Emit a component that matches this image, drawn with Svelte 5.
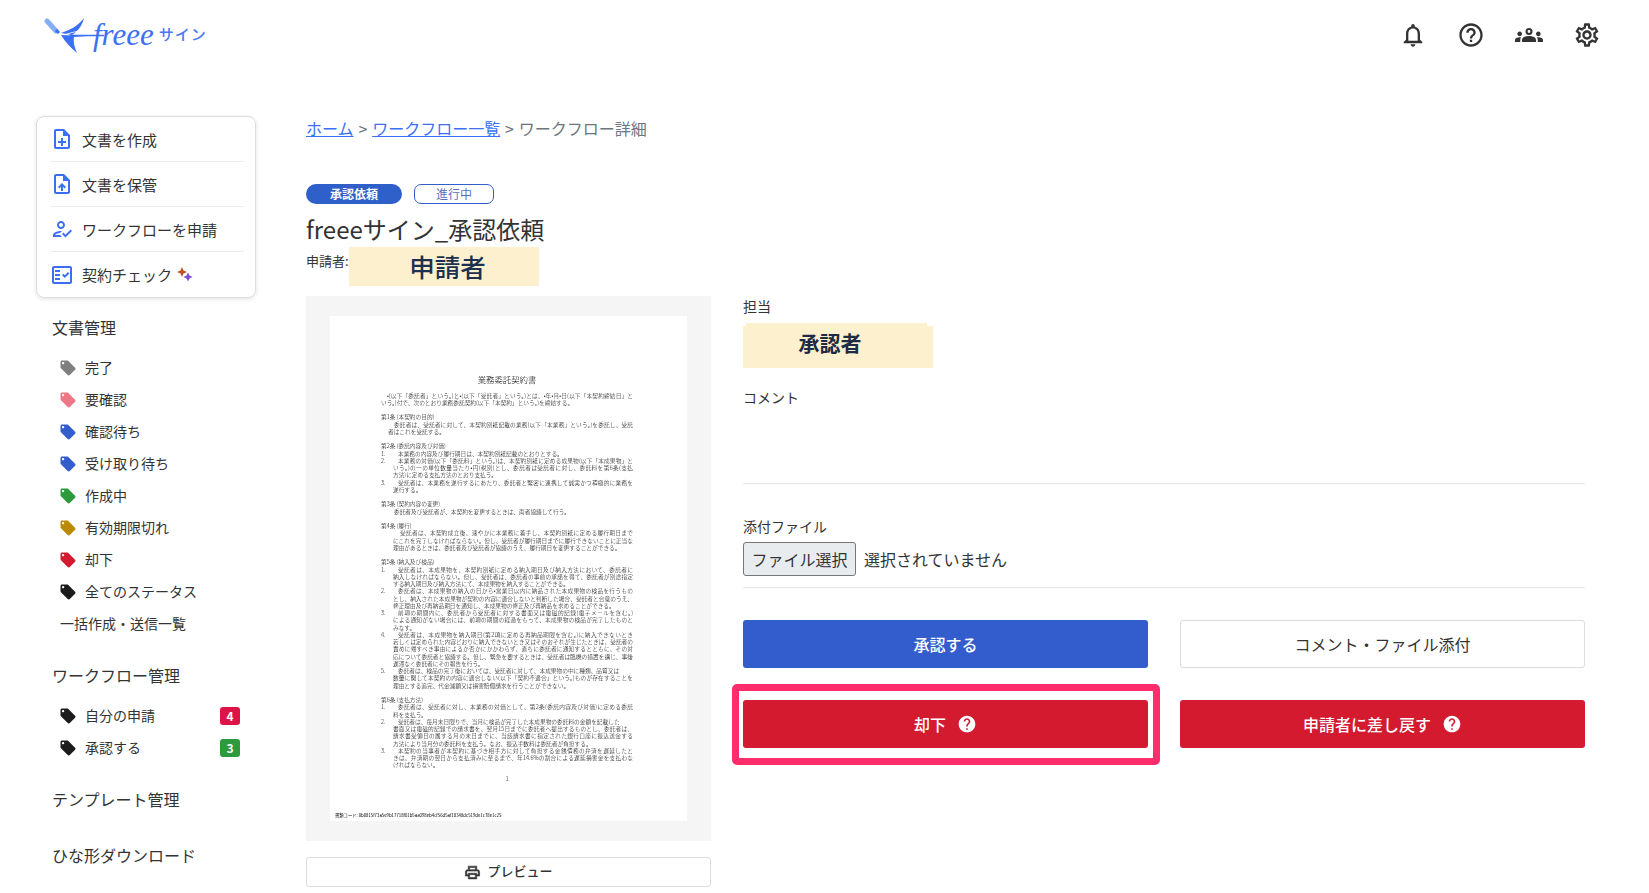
<script>
  const tagPath = "M21.41 11.58l-9-9C12.05 2.22 11.55 2 11 2H4c-1.1 0-2 .9-2 2v7c0 .55.22 1.05.59 1.42l9 9c.36.36.86.58 1.41.58.55 0 1.05-.22 1.41-.59l7-7c.37-.36.59-.86.59-1.41 0-.55-.23-1.06-.59-1.42zM5.5 7C4.67 7 4 6.33 4 5.5S4.67 4 5.5 4 7 4.67 7 5.5 6.33 7 5.5 7z";
  const helpPath = "M12 2C6.48 2 2 6.48 2 12s4.48 10 10 10 10-4.48 10-10S17.52 2 12 2zm1 17h-2v-2h2v2zm2.07-7.75l-.9.92C13.45 12.9 13 13.5 13 15h-2v-.5c0-1.1.45-2.1 1.17-2.83l1.24-1.26c.37-.36.59-.86.59-1.41 0-1.1-.9-2-2-2s-2 .9-2 2H8c0-2.21 1.79-4 4-4s4 1.79 4 4c0 .88-.36 1.68-.93 2.25z";

  const actions = [
    { label: "文書を作成", d: "M13 11h-2v3H8v2h3v3h2v-3h3v-2h-3zm1-9H6c-1.1 0-2 .9-2 2v16c0 1.1.89 2 1.99 2H18c1.1 0 2-.9 2-2V8l-6-6zm4 18H6V4h7v5h5v11z" },
    { label: "文書を保管", d: "M14 2H6c-1.1 0-2 .9-2 2v16c0 1.1.89 2 1.99 2H18c1.1 0 2-.9 2-2V8l-6-6zm4 18H6V4h7v5h5v11zM8 15.01l1.41 1.41L11 14.84V19h2v-4.16l1.59 1.59L16 15.01 12.01 11 8 15.01z" },
    { label: "ワークフローを申請", d: "M11 12c2.21 0 4-1.79 4-4s-1.79-4-4-4-4 1.79-4 4 1.79 4 4 4zm0-6c1.1 0 2 .9 2 2s-.9 2-2 2-2-.9-2-2 .9-2 2-2zM5 18c.2-.63 2.57-1.68 4.96-1.94l2.04-2c-.39-.04-.68-.06-1-.06-2.67 0-8 1.34-8 4v2h9l-2-2H5zm15.6-5.5l-5.13 5.17-2.07-2.08L12 17l3.47 3.5L22 13.91z" },
    { label: "契約チェック", sparkle: true, d: "M20 3H4c-1.1 0-2 .9-2 2v14c0 1.1.9 2 2 2h16c1.1 0 2-.9 2-2V5c0-1.1-.9-2-2-2zm0 16H4V5h16v14zM19.41 10.42L17.99 9l-3.17 3.17-1.41-1.42L12 12.16 14.82 15zM5 7h5v2H5zM5 11h5v2H5zM5 15h5v2H5z" }
  ];

  const statuses = [
    { label: "完了", color: "#7f7f7f" },
    { label: "要確認", color: "#ee7785" },
    { label: "確認待ち", color: "#335dcc" },
    { label: "受け取り待ち", color: "#335dcc" },
    { label: "作成中", color: "#2c9a3d" },
    { label: "有効期限切れ", color: "#bb8a00" },
    { label: "却下", color: "#d31a2f" },
    { label: "全てのステータス", color: "#1c1c1c" }
  ];

  const workflows = [
    { label: "自分の申請", count: 4, badge: "#dc1446" },
    { label: "承認する", count: 3, badge: "#2c9a3d" }
  ];

  // x: indent, n: clause number, j: stretch to the full measure
  const lines = [
    { x: 6, t: "•(以下「委託者」という。)と•(以下「受託者」という。)とは、•年•月•日(以下「本契約締結日」と", j: 1 },
    { t: "いう。)付で、次のとおり業務委託契約(以下「本契約」という。)を締結する。" },
    {},
    { t: "第1条 (本契約の目的)" },
    { x: 13, t: "委託者は、受託者に対して、本契約別紙記載の業務(以下「本業務」という。)を委託し、受託", j: 1 },
    { x: 7, t: "者はこれを受託する。" },
    {},
    { t: "第2条 (委託内容及び対価)" },
    { n: "1.", t: "本業務の内容及び履行期日は、本契約別紙記載のとおりとする。" },
    { n: "2.", t: "本業務の対価(以下「委託料」という。)は、本契約別紙に定める成果物(以下「本成果物」と", j: 1 },
    { x: 12, t: "いう。)の一の単位数量当たり•円(税別)とし、委託者は受託者に対し、委託料を第6条(支払", j: 1 },
    { x: 12, t: "方法)に定める支払方法のとおり支払う。" },
    { n: "3.", t: "受託者は、本業務を遂行するにあたり、委託者と緊密に連携して誠実かつ積極的に業務を", j: 1 },
    { x: 12, t: "遂行する。" },
    {},
    { t: "第3条 (契約内容の変更)" },
    { x: 13, t: "委託者及び受託者が、本契約を変更するときは、両者協議して行う。" },
    {},
    { t: "第4条 (履行)" },
    { x: 19, t: "受託者は、本契約成立後、速やかに本業務に着手し、本契約別紙に定める履行期日まで", j: 1 },
    { x: 12, t: "にこれを完了しなければならない。但し、受託者が履行期日までに履行できないことに正当な", j: 1 },
    { x: 12, t: "理由があるときは、委託者及び受託者が協議のうえ、履行期日を変更することができる。" },
    {},
    { t: "第5条 (納入及び検品)" },
    { n: "1.", t: "受託者は、本成果物を、本契約別紙に定める納入期日及び納入方法において、委託者に", j: 1 },
    { x: 12, t: "納入しなければならない。但し、受託者は、委託者の事前の承諾を得て、委託者が別途指定", j: 1 },
    { x: 12, t: "する納入期日及び納入方法にて、本成果物を納入することができる。" },
    { n: "2.", t: "委託者は、本成果物の納入の日から•営業日以内に納品された本成果物の検品を行うもの", j: 1 },
    { x: 12, t: "とし、納入された本成果物が契約の内容に適合しないと判断した場合、受託者と合意のうえ、", j: 1 },
    { x: 12, t: "修正理由及び再納品期日を通知し、本成果物の修正及び再納品を求めることができる。" },
    { n: "3.", t: "前項の期間内に、委託者から受託者に対する書面又は電磁的記録(電子メールを含む。)", j: 1 },
    { x: 12, t: "による通知がない場合には、前項の期間の経過をもって、本成果物の検品が完了したものと", j: 1 },
    { x: 12, t: "みなす。" },
    { n: "4.", t: "受託者は、本成果物を納入期日(第2項に定める再納品期限を含む。)に納入できないとき", j: 1 },
    { x: 12, t: "若しくは定められた内容どおりに納入できないとき又はそのおそれが生じたときは、受託者の", j: 1 },
    { x: 12, t: "責めに帰すべき事由によるか否かにかかわらず、直ちに委託者に通知するとともに、その対", j: 1 },
    { x: 12, t: "応について委託者と協議する。但し、緊急を要するときは、受託者は臨機の措置を講じ、事後", j: 1 },
    { x: 12, t: "遅滞なく委託者にその報告を行う。" },
    { n: "5.", t: "委託者は、検品の完了後においては、受託者に対して、本成果物の中に種類、品質又は" },
    { x: 12, t: "数量に関して本契約の内容に適合しない(以下「契約不適合」という。)ものが存在することを", j: 1 },
    { x: 12, t: "理由とする追完、代金減額又は損害賠償請求を行うことができない。" },
    {},
    { t: "第6条 (支払方法)" },
    { n: "1.", t: "委託者は、受託者に対し、本業務の対価として、第2条(委託内容及び対価)に定める委託", j: 1 },
    { x: 12, t: "料を支払う。" },
    { n: "2.", t: "受託者は、毎月末日限りで、当月に検品が完了した本成果物の委託料の金額を記載した" },
    { x: 12, t: "書面又は電磁的記録での請求書を、翌月15日までに委託者へ提出するものとし、委託者は、", j: 1 },
    { x: 12, t: "請求書受領日の属する月の末日までに、当該請求書に指定された銀行口座に振込送金する", j: 1 },
    { x: 12, t: "方法により当月分の委託料を支払う。なお、振込手数料は委託者が負担する。" },
    { n: "3.", t: "本契約の当事者が本契約に基づき相手方に対して負担する金銭債務の弁済を遅延したと", j: 1 },
    { x: 12, t: "きは、弁済期の翌日から支払済みに至るまで、年14.6%の割合による遅延損害金を支払わな", j: 1 },
    { x: 12, t: "ければならない。" }
  ];
</script>

<header class="top">
  <div class="logo">
    <svg class="bird" viewBox="0 0 60 40" width="60" height="40" aria-hidden="true">
      <path d="M3 4l9 10" stroke="#86aef8" stroke-width="5" stroke-linecap="round" fill="none" />
      <path d="M12 13l3 3" stroke="#3b6ff5" stroke-width="3" fill="none" />
      <path d="M17 16C26 13 34 9 40 1C38 9 34 14 28 18Z" fill="#3b6ff5" />
      <path d="M17 18L43 19L30 20C29 26 31 31 33 36C27 31 21 25 17 18Z" fill="#3b6ff5" />
      <path d="M22 17.200L36 13.500" stroke="#fff" stroke-width="0.8" fill="none" />
      <path d="M26 18.500H60" stroke="#3b6ff5" stroke-width="1.400" fill="none" />
    </svg>
    <span class="script">freee</span>
    <span class="sign">サイン</span>
  </div>
  <nav class="tools">
    <svg viewBox="0 0 24 24"><path d="M12 22c1.1 0 2-.9 2-2h-4c0 1.1.9 2 2 2zm6-6v-5c0-3.07-1.63-5.64-4.5-6.32V4c0-.83-.67-1.5-1.5-1.5s-1.5.67-1.5 1.5v.68C7.64 5.36 6 7.92 6 11v5l-2 2v1h16v-1l-2-2zm-2 1H8v-6c0-2.48 1.51-4.5 4-4.5s4 2.02 4 4.5v6z" /></svg>
    <svg viewBox="0 0 24 24"><path d="M11 18h2v-2h-2v2zm1-16C6.48 2 2 6.48 2 12s4.48 10 10 10 10-4.48 10-10S17.52 2 12 2zm0 18c-4.41 0-8-3.59-8-8s3.59-8 8-8 8 3.59 8 8-3.59 8-8 8zm0-14c-2.21 0-4 1.79-4 4h2c0-1.1.9-2 2-2s2 .9 2 2c0 2-3 1.75-3 5h2c0-2.25 3-2.5 3-5 0-2.21-1.79-4-4-4z" /></svg>
    <svg viewBox="0 0 24 24"><path fill-rule="evenodd" d="M12 6a3 3 0 1 1 0 6 3 3 0 0 1 0-6zm0 1.800a1.200 1.200 0 1 0 0 2.400 1.200 1.200 0 0 0 0-2.400zM12 12.750c1.630 0 3.070.390 4.240.900 1.080.480 1.760 1.560 1.760 2.730V18H6v-1.610c0-1.180.680-2.260 1.760-2.730 1.170-.520 2.610-.910 4.240-.910zM4 13c1.100 0 2-.900 2-2s-.900-2-2-2-2 .900-2 2 .900 2 2 2zm1.130 1.100c-.370-.060-.740-.100-1.130-.100-.990 0-1.930.210-2.780.580C.480 14.900 0 15.620 0 16.430V18h4.500v-1.610c0-.830.230-1.610.630-2.290zM20 13c1.100 0 2-.900 2-2s-.900-2-2-2-2 .900-2 2 .900 2 2 2zm4 3.430c0-.810-.480-1.530-1.220-1.850-.850-.370-1.790-.580-2.780-.580-.390 0-.760.040-1.130.100.400.680.630 1.460.630 2.290V18H24v-1.570z" /></svg>
    <svg viewBox="0 0 24 24"><path d="M19.43 12.98c.04-.32.07-.64.07-.98 0-.34-.03-.66-.07-.98l2.11-1.65c.19-.15.24-.42.12-.64l-2-3.46c-.09-.16-.26-.25-.44-.25-.06 0-.12.01-.17.03l-2.49 1c-.52-.4-1.08-.73-1.69-.98l-.38-2.65C14.46 2.18 14.25 2 14 2h-4c-.25 0-.46.18-.49.42l-.38 2.65c-.61.25-1.17.59-1.69.98l-2.49-1c-.06-.02-.12-.03-.18-.03-.17 0-.34.09-.43.25l-2 3.46c-.13.22-.07.49.12.64l2.11 1.65c-.04.32-.07.65-.07.98 0 .33.03.66.07.98l-2.11 1.65c-.19.15-.24.42-.12.64l2 3.46c.09.16.26.25.44.25.06 0 .12-.01.17-.03l2.49-1c.52.4 1.08.73 1.69.98l.38 2.65c.03.24.24.42.49.42h4c.25 0 .46-.18.49-.42l.38-2.65c.61-.25 1.17-.59 1.69-.98l2.49 1c.06.02.12.03.18.03.17 0 .34-.09.43-.25l2-3.46c.12-.22.07-.49-.12-.64l-2.11-1.65zm-1.98-1.71c.04.31.05.52.05.73 0 .21-.02.43-.05.73l-.14 1.13.89.7 1.08.84-.7 1.21-1.27-.51-1.04-.42-.9.68c-.43.32-.84.56-1.25.73l-1.06.43-.16 1.13-.2 1.35h-1.4l-.19-1.35-.16-1.13-1.06-.43c-.43-.18-.83-.41-1.23-.71l-.91-.7-1.06.43-1.27.51-.7-1.21 1.08-.84.89-.7-.14-1.13c-.03-.31-.05-.54-.05-.74s.02-.43.05-.73l.14-1.13-.89-.7-1.08-.84.7-1.21 1.27.51 1.04.42.9-.68c.43-.32.84-.56 1.25-.73l1.06-.43.16-1.13.2-1.35h1.39l.19 1.35.16 1.13 1.06.43c.43.18.83.41 1.23.71l.91.7 1.06-.43 1.27-.51.7 1.21-1.07.85-.89.7.14 1.13zM12 8c-2.21 0-4 1.79-4 4s1.79 4 4 4 4-1.79 4-4-1.79-4-4-4zm0 6c-1.1 0-2-.9-2-2s.9-2 2-2 2 .9 2 2-.9 2-2 2z" /></svg>
  </nav>
</header>

<div class="layout">
  <aside class="side">
    <div class="card">
      {#each actions as a}
        <div class="action">
          <svg viewBox="0 0 24 24"><path d={a.d} /></svg>
          <span>{a.label}</span>
          {#if a.sparkle}
            <svg class="sparkle" viewBox="0 0 16 16">
              <path d="M5 0L6.500 3.500 10 5 6.500 6.500 5 10 3.500 6.500 0 5 3.500 3.500Z" fill="#c2501c" />
              <path d="M11 5.500L12.500 8.500 15.500 10 12.500 11.500 11 14.500 9.500 11.500 6.500 10 9.500 8.500Z" fill="#7a4fdc" />
            </svg>
          {/if}
        </div>
      {/each}
    </div>

    <h3 class="group first">文書管理</h3>
    <ul class="list">
      {#each statuses as s}
        <li>
          <svg class="tag" viewBox="0 0 24 24"><path d={tagPath} fill={s.color} /></svg>
          {s.label}
        </li>
      {/each}
      <li class="plain">一括作成・送信一覧</li>
    </ul>

    <h3 class="group">ワークフロー管理</h3>
    <ul class="list">
      {#each workflows as w}
        <li>
          <svg class="tag" viewBox="0 0 24 24"><path d={tagPath} fill="#1c1c1c" /></svg>
          {w.label}
          <b class="count" style="background:{w.badge}">{w.count}</b>
        </li>
      {/each}
    </ul>

    <h3 class="group">テンプレート管理</h3>
    <h3 class="group far">ひな形ダウンロード</h3>
  </aside>

  <main class="main">
    <div class="crumbs">
      <a href="#home">ホーム</a> &gt; <a href="#list">ワークフロー一覧</a> &gt; ワークフロー詳細
    </div>

    <div class="pills">
      <span class="pill solid">承認依頼</span>
      <span class="pill outline">進行中</span>
    </div>

    <h1 class="title">freeeサイン_承認依頼</h1>

    <div class="applicant">
      <span class="applicant-label">申請者:</span>
      <span class="applicant-name">申請者</span>
    </div>

    <div class="content">
      <section class="left">
        <div class="viewer">
          <div class="page">
            <div class="doc-title">業務委託契約書</div>
            <div class="doc-body">
              {#each lines as l}
                <div class="line" style="margin-left:{l.x || 0}px">
                  {#if l.n}<span class="num">{l.n}</span>{/if}
                  <span class="txt" class:just={l.j}>{l.t || ""}</span>
                </div>
              {/each}
            </div>
            <div class="page-no">1</div>
            <div class="code">書類コード: 0b0815f73a5e9b17718f01b5aa098eb4cf56d5af18348dc519de1c78e1c25</div>
          </div>
        </div>
        <button class="preview" type="button">
          <svg viewBox="0 0 24 24"><path d="M19 8h-1V3H6v5H5c-1.660 0-3 1.340-3 3v6h4v4h12v-4h4v-6c0-1.660-1.340-3-3-3zM8 5h8v3H8V5zm8 14H8v-4h8v4zm4-4h-2v-2H6v2H4v-4c0-.550.450-1 1-1h14c.550 0 1 .450 1 1v4z" /></svg>
          <span>プレビュー</span>
        </button>
      </section>

      <section class="right">
        <div class="label">担当</div>
        <div class="assignee">承認者</div>

        <div class="label comment">コメント</div>
        <hr class="rule comment-rule" />

        <div class="label attach">添付ファイル</div>
        <div class="file">
          <button class="file-btn" type="button">ファイル選択</button>
          <span>選択されていません</span>
        </div>
        <hr class="rule file-rule" />

        <div class="buttons">
          <button class="btn blue" type="button">承認する</button>
          <button class="btn ghost" type="button">コメント・ファイル添付</button>
          <div class="marked">
            <button class="btn red" type="button">
              却下
              <svg viewBox="0 0 24 24"><path d={helpPath} /></svg>
            </button>
          </div>
          <button class="btn red" type="button">
            申請者に差し戻す
            <svg viewBox="0 0 24 24"><path d={helpPath} /></svg>
          </button>
        </div>
      </section>
    </div>
  </main>
</div>

<style>
  :global(body) {
    font-family: "Noto Sans CJK JP", "Noto Sans", sans-serif;
    color: #333;
    background: #fff;
  }

  .top {
    height: 116px;
    display: flex;
    align-items: flex-start;
    justify-content: space-between;
    padding: 0 48px 0 44px;
    box-sizing: border-box;
  }

  .logo {
    display: flex;
    align-items: center;
    height: 40px;
    margin-top: 15px;
    color: #3b6ff5;
  }
  .bird {
    flex: none;
    margin-top: 4px;
  }
  .script {
    font-family: "Liberation Serif", serif;
    font-style: italic;
    font-size: 31px;
    margin-left: -11px;
    line-height: 40px;
  }
  .sign {
    font-size: 15px;
    font-weight: 500;
    letter-spacing: 1px;
    margin: -3px 0 0 5px;
    color: #4a78f3;
  }

  .tools {
    display: flex;
    gap: 30px;
    margin-top: 21px;
  }
  .tools svg {
    width: 28px;
    height: 28px;
    fill: #333;
  }

  .layout {
    display: flex;
    padding-left: 36px;
  }

  .side {
    width: 220px;
    flex: none;
  }

  .card {
    height: 182px;
    box-sizing: border-box;
    border: 1px solid #ddd;
    border-radius: 8px;
    box-shadow: 0 1px 4px rgba(0, 0, 0, 0.12);
    padding: 0 11px 0 13px;
  }
  .action {
    height: 45px;
    box-sizing: border-box;
    display: flex;
    align-items: center;
    gap: 8px;
    font-size: 15px;
    border-bottom: 1px solid #ececec;
  }
  .action:last-child {
    border-bottom: 0;
  }
  .action svg {
    width: 24px;
    height: 24px;
    fill: #3b6ff5;
    flex: none;
  }
  .action .sparkle {
    width: 16px;
    height: 16px;
    margin-left: -3px;
  }

  .group {
    margin: 24px 0 0 16px;
    font-size: 16px;
    font-weight: 400;
    line-height: 24px;
  }
  .group.first {
    margin-top: 17px;
  }
  .group.far {
    margin-top: 32px;
  }

  .list {
    list-style: none;
    margin: 12px 0 0;
    padding: 0 16px 0 23px;
  }
  .list li {
    height: 32px;
    display: flex;
    align-items: center;
    gap: 8px;
    font-size: 14px;
  }
  .list li.plain {
    padding-left: 1px;
  }
  .tag {
    width: 18px;
    height: 18px;
    flex: none;
    margin-top: 2px;
  }
  .count {
    margin-left: auto;
    margin-top: 2px;
    width: 20px;
    height: 18px;
    border-radius: 3px;
    color: #fff;
    font-size: 12px;
    font-weight: 700;
    text-align: center;
    line-height: 18px;
  }

  .main {
    width: 1279px;
    margin-left: 50px;
  }

  .crumbs {
    height: 24px;
    line-height: 24px;
    font-size: 16px;
    color: #6c757d;
    word-spacing: 1.300px;
  }
  .crumbs a {
    color: #3b6ff5;
    text-decoration: underline;
  }

  .pills {
    display: flex;
    gap: 12px;
    margin-top: 44px;
  }
  .pill {
    height: 20px;
    box-sizing: border-box;
    font-size: 12px;
    line-height: 18px;
    text-align: center;
  }
  .solid {
    width: 96px;
    background: #2f5fc8;
    color: #fff;
    font-weight: 700;
    border-radius: 10px;
    line-height: 20px;
  }
  .outline {
    width: 80px;
    border: 1px solid #335dcc;
    border-radius: 7px;
    color: #5a6fc0;
  }

  .title {
    margin: 8px 0 0;
    font-size: 24px;
    font-weight: 400;
    line-height: 34px;
  }

  .applicant {
    display: flex;
    height: 39px;
    margin-top: 1px;
  }
  .applicant-label {
    font-size: 13px;
    line-height: 20px;
    padding-top: 4px;
    width: 43px;
  }
  .applicant-name {
    width: 190px;
    background: #fdf0cf;
    color: #1c3050;
    font-size: 25.500px;
    font-weight: 500;
    line-height: 38px;
    text-align: center;
    text-indent: 7px;
  }

  .content {
    display: flex;
    gap: 32px;
    margin-top: 10px;
  }

  .left {
    width: 405px;
    flex: none;
  }
  .viewer {
    height: 545px;
    box-sizing: border-box;
    background: #f5f5f5;
    padding: 20px 24px;
  }
  .page {
    height: 505px;
    box-sizing: border-box;
    background: #fff;
    padding: 57px 54px 0 51px;
    display: flex;
    flex-direction: column;
    font-weight: 300;
    color: #000;
    filter: blur(0.35px);
  }
  .doc-title {
    text-align: center;
    font-size: 8.400px;
    line-height: 12px;
  }
  .doc-body {
    margin-top: 6.500px;
    font-size: 5.700px;
    line-height: 7.250px;
  }
  .line {
    display: flex;
    height: 7.250px;
  }
  .num {
    flex: none;
    width: 17px;
  }
  .txt {
    flex: 1;
    min-width: 0;
    white-space: nowrap;
    overflow: hidden;
  }
  .txt.just {
    text-align: justify;
    text-align-last: justify;
  }
  .page-no {
    margin-top: 6.500px;
    text-align: center;
    font-size: 5.700px;
    line-height: 8px;
  }
  .code {
    margin: 29px -54px 0 -46px;
    font-size: 4.300px;
    line-height: 6px;
    font-weight: 400;
    white-space: nowrap;
  }

  .preview {
    width: 100%;
    height: 30px;
    margin-top: 16px;
    display: flex;
    align-items: center;
    justify-content: center;
    gap: 6px;
    background: #fff;
    border: 1px solid #ddd;
    border-radius: 3px;
    font: 500 13px "Noto Sans CJK JP", sans-serif;
    color: #333;
    padding: 0;
  }
  .preview span {
    margin-top: -3px;
  }
  .preview svg {
    width: 17px;
    height: 17px;
    fill: #333;
    stroke: #333;
    stroke-width: 0.8;
  }

  .right {
    width: 842px;
    flex: none;
  }
  .label {
    font-size: 14px;
    line-height: 20px;
    padding-bottom: 2px;
  }
  .assignee {
    position: relative;
    width: 190px;
    height: 42px;
    margin-top: 8px;
    background: #fdf0cf;
    color: #1f2a44;
    font-size: 21px;
    font-weight: 700;
    line-height: 32px;
    text-align: center;
    text-indent: -16px;
  }
  .assignee::before {
    content: "";
    position: absolute;
    top: -3px;
    left: 3px;
    right: 6px;
    height: 3px;
    background: #fdf0cf;
  }
  .label.comment {
    margin-top: 19px;
  }
  .rule {
    margin: 0;
    border: 0;
    border-top: 1px solid #e5e5e5;
  }
  .comment-rule {
    margin-top: 74px;
  }
  .label.attach {
    margin-top: 32px;
  }
  .file {
    display: flex;
    align-items: center;
    gap: 8px;
    margin-top: 4px;
    font-size: 16px;
  }
  .file-btn {
    height: 34px;
    width: 113px;
    padding: 0;
    background: #e9ecef;
    border: 1px solid #777;
    border-radius: 3px;
    font: 400 16px "Noto Sans CJK JP", sans-serif;
    color: #333;
  }
  .file-rule {
    margin-top: 11px;
  }

  .buttons {
    display: grid;
    grid-template-columns: 405px 405px;
    gap: 32px;
    margin-top: 32px;
  }
  .btn {
    width: 100%;
    height: 48px;
    padding: 0;
    border: 0;
    border-radius: 3px;
    display: flex;
    align-items: center;
    justify-content: center;
    gap: 11px;
    font: 500 16px "Noto Sans CJK JP", sans-serif;
  }
  .btn svg {
    width: 20px;
    height: 20px;
    fill: #fff;
  }
  .blue {
    background: #335dcc;
    color: #fff;
  }
  .ghost {
    background: #fff;
    border: 1px solid #ddd;
    color: #333;
    font-weight: 400;
  }
  .red {
    background: #d31a2f;
    color: #fff;
  }
  .marked {
    position: relative;
  }
  /* annotation frame drawn over the button */
  .marked::after {
    content: "";
    position: absolute;
    inset: -16px -12px -17px -11px;
    border: 7px solid #ff2d6b;
    border-radius: 5px;
    pointer-events: none;
  }
</style>
